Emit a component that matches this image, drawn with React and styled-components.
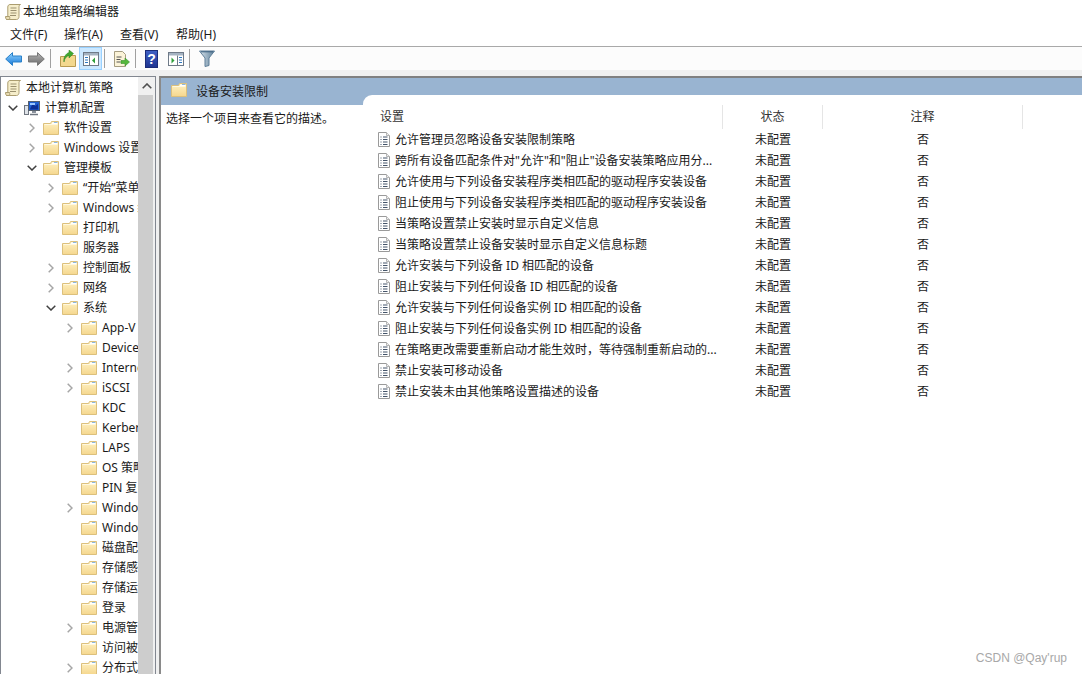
import React, { useId } from "react";
import styled, { createGlobalStyle } from "styled-components";

const Global = createGlobalStyle`
  html, body { margin: 0; padding: 0; background: #fff; overflow: hidden; }
  * { box-sizing: border-box; }
`;

const FONT = `"Noto Sans", "Noto Sans CJK SC", sans-serif`;

const Window = styled.div`
  position: relative;
  width: 1082px;
  height: 674px;
  display: flex;
  flex-direction: column;
  overflow: hidden;
  background: #fff;
  color: #000;
  font: 12px/20px ${FONT};
`;
const TitleBar = styled.div`
  height: 23px;
  display: flex;
  align-items: center;
  gap: 2px;
  padding-left: 5px;
  color: #1a1a1a;
`;
const MenuBar = styled.div`
  height: 24px;
  display: flex;
  padding: 1px 0 0 10px;
  align-items: center;
  border-bottom: 1px solid #a9a9a9;
  color: #1a1a1a;
`;
const MenuItem = styled.span`
  width: 56px;
  &:first-child { width: 54px; }
`;
const Toolbar = styled.div`
  height: 23px;
  display: flex;
  align-items: center;
  padding-left: 2px;
  background: #fcfcfc;
`;
const ToolButton = styled.div`
  width: 23px;
  height: 23px;
  display: flex;
  align-items: center;
  justify-content: center;
  border: 1px solid ${(p) => (p.$active ? "#99d1ff" : "transparent")};
  background: ${(p) => (p.$active ? "#cce8ff" : "transparent")};
`;
const ToolSep = styled.div`
  width: 1px;
  height: 19px;
  margin: 0 5px 0 2px;
  background: #a0a0a0;
`;
const Main = styled.div`
  flex: 1;
  min-height: 0;
  display: flex;
  gap: 3px;
  padding-top: 6px;
  background: #f0f0f0;
`;
const TreePanel = styled.div`
  width: 156px;
  display: flex;
  background: #fff;
  border: 1px solid #828790;
  border-bottom: 0;
  overflow: hidden;
`;
const Tree = styled.div`
  width: 137px;
  flex: none;
  overflow: hidden;
  padding-top: 1px;
`;
const TreeRow = styled.div`
  height: 20px;
  display: flex;
  align-items: center;
  white-space: nowrap;
  padding-left: ${(p) => (p.$level === 0 ? 4 : 4 + (p.$level - 1) * 19)}px;
  color: #1a1a1a;
`;
const ChevronSlot = styled.span`
  width: 19px;
  flex: none;
  display: flex;
  align-items: center;
`;
const TreeLabel = styled.span`
  margin-left: 5px;
`;
const Scrollbar = styled.div`
  flex: none;
  width: 17px;
  display: flex;
  flex-direction: column;
  background: #f0f0f0;
`;
const ScrollButton = styled.div`
  height: 18px;
  display: flex;
  align-items: center;
  justify-content: center;
`;
const ScrollThumb = styled.div`
  flex: 1;
  width: 15px;
  background: #cdcdcd;
`;
const ContentPanel = styled.div`
  flex: 1;
  min-width: 0;
  display: flex;
  border-top: 2px solid #808080;
  border-left: 2px solid #8a8a8a;
  background: #99b4d1;
`;
const Extended = styled.div`
  width: 202px;
  flex: none;
  display: flex;
  flex-direction: column;
`;
const PanelHeading = styled.div`
  height: 27px;
  display: flex;
  align-items: center;
  gap: 9px;
  padding: 0 0 0 10px;
  color: #1a1a1a;
`;
const PanelFolder = styled.span`
  display: flex;
  margin-bottom: 3px;
`;
const Description = styled.div`
  flex: 1;
  background: #fff;
  padding: 4px 0 0 5px;
  color: #1a1a1a;
`;
const ListArea = styled.div`
  flex: 1;
  margin-top: 17px;
  padding-top: 10px;
  background: #fff;
  border-top-left-radius: 9px;
`;
const ListHeader = styled.div`
  height: 24px;
  display: grid;
  grid-template-columns: 360px 100px 200px;
  color: #333;
`;
const HeadCell = styled.div`
  display: flex;
  align-items: center;
  justify-content: ${(p) => (p.$left ? "flex-start" : "center")};
  padding-left: ${(p) => (p.$left ? "17px" : "0")};
  padding-bottom: 1px;
  border-right: 1px solid #e5e5e5;
`;
const ListRow = styled.div`
  height: 21px;
  display: grid;
  grid-template-columns: 360px 100px 200px;
  align-items: center;
  color: #1a1a1a;
`;
const NameCell = styled.div`
  display: flex;
  align-items: center;
  gap: 5px;
  padding-left: 15px;
  white-space: nowrap;
`;
const CenterCell = styled.div`
  text-align: center;
`;
const Watermark = styled.div`
  position: absolute;
  right: 15px;
  bottom: 7px;
  font: 12px/18px "Liberation Sans", Arial, sans-serif;
  color: #a8a8a8;
`;

const Folder = () => {
  const id = useId();
  return (
    <svg width="16" height="14" viewBox="0 0 16 14" style={{ flex: "none" }}>
      <defs>
        <linearGradient id={id} x1="0" y1="0" x2="0" y2="1">
          <stop offset="0" stopColor="#fff2c4" />
          <stop offset="1" stopColor="#f5d78e" />
        </linearGradient>
      </defs>
      <path d="M.5 2.500h7l1-2h7v13H.5z" fill={`url(#${id})`} stroke="#dcc07c" />
      <path d="M9 1.500h5.500v1.500H9z" fill="#fff" />
      <path d="M11 1.500h3.500" stroke="#8cb8e0" />
      <path d="M1.500 3.500h13" stroke="#fff8e0" />
    </svg>
  );
};

const Chevron = ({ open }) =>
  open ? (
    <svg width="10" height="6" viewBox="0 0 10 6" style={{ marginLeft: 3 }}>
      <path d="M.7.7 5 5 9.300.7" fill="none" stroke="#404040" strokeWidth="1.500" />
    </svg>
  ) : (
    <svg width="6" height="10" viewBox="0 0 6 10" style={{ marginLeft: 5 }}>
      <path d="M.7.7 5 5 .7 9.300" fill="none" stroke="#a6a6a6" strokeWidth="1.500" />
    </svg>
  );

const Scroll = () => (
  <svg width="16" height="16" viewBox="0 0 16 16" style={{ flex: "none" }}>
    <path d="M5 .5h10.500c-1 .5-1.500 1.200-1.500 2.300V12.500c0 1.700-1 3-2.500 3H1c1-.5 1.800-1.500 1.800-3V3C2.800 1.500 3.800.5 5 .5z" fill="#f6eecb" stroke="#ab9d70" />
    <path d="M5.500 4h6M5.500 6.500h6M5.500 9h6M5 11.500h6" stroke="#9b9170" />
    <path d="M.5 12.500h4c.5 1 .5 2-.5 3H1.500c-.7-.7-1-1.800-1-3z" fill="#e9ddb3" stroke="#ab9d70" />
  </svg>
);

const Computer = () => (
  <svg width="16" height="16" viewBox="0 0 16 16" style={{ flex: "none" }}>
    <rect x="0.500" y="5.500" width="4" height="9" fill="#dfe3e8" stroke="#6f7680" />
    <rect x="4.500" y="1.500" width="11" height="9" fill="#1f5fd0" stroke="#56606c" />
    <path d="M6 9l3-6 2 3 3-2v5.500H6z" fill="#0c2f95" />
    <path d="M6 3h5v2H6z" fill="#9cc8ff" />
    <rect x="8" y="11" width="4" height="2" fill="#8b929c" />
    <path d="M6 14.500h8" stroke="#6f7680" strokeWidth="1.500" />
  </svg>
);

const PolicyDoc = () => (
  <svg width="12" height="15" viewBox="0 0 12 15" style={{ flex: "none" }}>
    <path d="M.5.500h8l3 3v11H.5z" fill="#fff" stroke="#9a9a9a" />
    <path d="M8.500.500v3h3" fill="#eee" stroke="#b5b5b5" />
    <path d="M2.500 5h1M5 5h4.500M2.500 7.500h1M5 7.500h4.500M2.500 10h1M5 10h4.500M2.500 12.500h1M5 12.500h4.500" stroke="#44546a" />
  </svg>
);

const BackArrow = () => {
  const id = useId();
  return (
    <svg width="17" height="14" viewBox="0 0 17 14">
      <defs>
        <linearGradient id={id} x1="0" y1="0" x2="0" y2="1">
          <stop offset="0" stopColor="#8fd3ff" />
          <stop offset="1" stopColor="#1878d8" />
        </linearGradient>
      </defs>
      <path d="M.7 7 7.500.6v3.400h9v6h-9v3.400z" fill={`url(#${id})`} stroke="#2a80c8" />
    </svg>
  );
};

const ForwardArrow = () => {
  const id = useId();
  return (
    <svg width="17" height="14" viewBox="0 0 17 14">
      <defs>
        <linearGradient id={id} x1="0" y1="0" x2="0" y2="1">
          <stop offset="0" stopColor="#b5b5b5" />
          <stop offset="1" stopColor="#6a6a6a" />
        </linearGradient>
      </defs>
      <path d="M16.300 7 9.500.6v3.400h-9v6h9v3.400z" fill={`url(#${id})`} stroke="#777" />
    </svg>
  );
};

const UpFolder = () => (
  <svg width="16" height="17" viewBox="0 0 16 17">
    <path d="M.5 6.500h5l1-1h9v11H.5z" fill="#f3d88e" stroke="#b99a50" />
    <path d="M4 12c.5-4 3-6 5-6.500V8l4.500-4.500L9 0v2.500C6 3.500 3 7.500 4 12z" fill="#3fa92f" stroke="#2c7d22" strokeWidth=".5" />
  </svg>
);

const PaneIcon = ({ mirrored }) => (
  <svg width="16" height="14" viewBox="0 0 16 14">
    <rect x=".5" y=".5" width="15" height="13" fill="#fff" stroke="#6f7a88" />
    <rect x="1" y="1" width="14" height="2.500" fill="#a5b3c2" />
    {mirrored ? (
      <>
        <path d="M9.500 3.500v10" stroke="#6f7a88" />
        <path d="M11 5.500h3M11 8h3M11 10.500h3" stroke="#2f78c0" />
        <path d="M3.500 5.500l3 3-3 3z" fill="#2fa03a" />
      </>
    ) : (
      <>
        <path d="M6.500 3.500v10" stroke="#6f7a88" />
        <path d="M2 5.500h3M2 8h3M2 10.500h3" stroke="#2f78c0" />
        <path d="M12 5.500l-3 3 3 3z" fill="#2fa03a" />
      </>
    )}
  </svg>
);

const ExportIcon = () => (
  <svg width="17" height="16" viewBox="0 0 17 16">
    <path d="M1.500.5h8l3 3v12h-11z" fill="#fbf3d8" stroke="#a59c80" />
    <path d="M3.500 6h5M3.500 8.500h4M3.500 11h4" stroke="#555" />
    <path d="M8 9.500h4V7l4.500 4-4.500 4v-2.500H8z" fill="#55b83c" stroke="#3b8f2a" strokeWidth=".6" />
  </svg>
);

const HelpIcon = styled.div`
  width: 13px;
  height: 18px;
  margin-right: 2px;
  display: flex;
  align-items: center;
  justify-content: center;
  background: linear-gradient(#3f5fc5, #1f3591);
  border: 1px solid #1b2c78;
  color: #fff;
  font: bold 14px/16px "Liberation Sans", sans-serif;
`;

const FilterIcon = () => {
  const id = useId();
  return (
    <svg width="16" height="17" viewBox="0 0 16 17">
      <defs>
        <linearGradient id={id} x1="0" y1="0" x2="1" y2="0">
          <stop offset="0" stopColor="#d7e3ec" />
          <stop offset="1" stopColor="#5d7f99" />
        </linearGradient>
      </defs>
      <path d="M.5 1h15L10 8v7.500l-4 1V8z" fill={`url(#${id})`} stroke="#5f7f99" />
      <path d="M2 1.800h12" stroke="#3e6280" />
    </svg>
  );
};

const treeItems = [
  [1, "open", "计算机配置", "computer"],
  [2, "closed", "软件设置"],
  [2, "closed", "Windows 设置"],
  [2, "open", "管理模板"],
  [3, "closed", "“开始”菜单和任务栏"],
  [3, "closed", "Windows 组件"],
  [3, null, "打印机"],
  [3, null, "服务器"],
  [3, "closed", "控制面板"],
  [3, "closed", "网络"],
  [3, "open", "系统"],
  [4, "closed", "App-V"],
  [4, null, "Device Guard"],
  [4, "closed", "Internet 通信"],
  [4, "closed", "iSCSI"],
  [4, null, "KDC"],
  [4, null, "Kerberos"],
  [4, null, "LAPS"],
  [4, null, "OS 策略"],
  [4, null, "PIN 复杂性"],
  [4, "closed", "Windows 文件"],
  [4, null, "Windows 时间"],
  [4, null, "磁盘配额"],
  [4, null, "存储感知"],
  [4, null, "存储运行状况"],
  [4, null, "登录"],
  [4, "closed", "电源管理"],
  [4, null, "访问被拒绝协助"],
  [4, "closed", "分布式 COM"],
];

const policies = [
  "允许管理员忽略设备安装限制策略",
  "跨所有设备匹配条件对\"允许\"和\"阻止\"设备安装策略应用分...",
  "允许使用与下列设备安装程序类相匹配的驱动程序安装设备",
  "阻止使用与下列设备安装程序类相匹配的驱动程序安装设备",
  "当策略设置禁止安装时显示自定义信息",
  "当策略设置禁止设备安装时显示自定义信息标题",
  "允许安装与下列设备 ID 相匹配的设备",
  "阻止安装与下列任何设备 ID 相匹配的设备",
  "允许安装与下列任何设备实例 ID 相匹配的设备",
  "阻止安装与下列任何设备实例 ID 相匹配的设备",
  "在策略更改需要重新启动才能生效时，等待强制重新启动的...",
  "禁止安装可移动设备",
  "禁止安装未由其他策略设置描述的设备",
];

export default function App() {
  return (
    <Window>
      <Global />
      <TitleBar>
        <Scroll />
        <span>本地组策略编辑器</span>
      </TitleBar>
      <MenuBar>
        <MenuItem>文件(F)</MenuItem>
        <MenuItem>操作(A)</MenuItem>
        <MenuItem>查看(V)</MenuItem>
        <MenuItem>帮助(H)</MenuItem>
      </MenuBar>
      <Toolbar>
        <ToolButton><BackArrow /></ToolButton>
        <ToolButton><ForwardArrow /></ToolButton>
        <ToolSep />
        <ToolButton><UpFolder /></ToolButton>
        <ToolButton $active><PaneIcon mirrored={false} /></ToolButton>
        <ToolSep />
        <ToolButton><ExportIcon /></ToolButton>
        <ToolSep />
        <ToolButton><HelpIcon>?</HelpIcon></ToolButton>
        <ToolButton><PaneIcon mirrored /></ToolButton>
        <ToolSep />
        <ToolButton><FilterIcon /></ToolButton>
      </Toolbar>
      <Main>
        <TreePanel>
          <Tree>
            <TreeRow $level={0}>
              <Scroll />
              <TreeLabel>本地计算机 策略</TreeLabel>
            </TreeRow>
            {treeItems.map(([level, state, label, icon]) => (
              <TreeRow key={label} $level={level}>
                <ChevronSlot>{state && <Chevron open={state === "open"} />}</ChevronSlot>
                {icon === "computer" ? <Computer /> : <Folder />}
                <TreeLabel>{label}</TreeLabel>
              </TreeRow>
            ))}
          </Tree>
          <Scrollbar>
            <ScrollButton>
              <svg width="10" height="6" viewBox="0 0 10 6">
                <path d="M.7 5.300 5 1l4.300 4.300" fill="none" stroke="#505050" strokeWidth="1.600" />
              </svg>
            </ScrollButton>
            <ScrollThumb />
          </Scrollbar>
        </TreePanel>
        <ContentPanel>
          <Extended>
            <PanelHeading>
              <PanelFolder><Folder /></PanelFolder>
              <span>设备安装限制</span>
            </PanelHeading>
            <Description>选择一个项目来查看它的描述。</Description>
          </Extended>
          <ListArea>
            <ListHeader>
              <HeadCell $left>设置</HeadCell>
              <HeadCell>状态</HeadCell>
              <HeadCell>注释</HeadCell>
            </ListHeader>
            {policies.map((p) => (
              <ListRow key={p}>
                <NameCell>
                  <PolicyDoc />
                  <span>{p}</span>
                </NameCell>
                <CenterCell>未配置</CenterCell>
                <CenterCell>否</CenterCell>
              </ListRow>
            ))}
          </ListArea>
        </ContentPanel>
      </Main>
      <Watermark>CSDN @Qay'rup</Watermark>
    </Window>
  );
}
